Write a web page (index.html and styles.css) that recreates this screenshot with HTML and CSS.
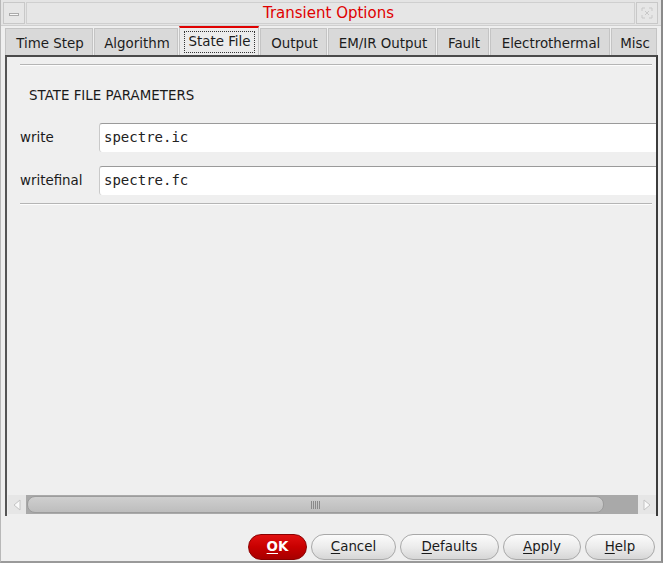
FILE: index.html
```html
<!DOCTYPE html>
<html>
<head>
<meta charset="utf-8">
<link rel="stylesheet" href="styles.css">
</head>
<body>
<div class="window">
  <div class="titlebar">
    <div class="tb-box tb-left"><span class="minbar"></span></div>
    <div class="tb-title">Transient Options</div>
    <div class="tb-box tb-right">
      <svg width="14" height="14" viewBox="0 0 14 14"><g fill="none" stroke="#c8c8c8" stroke-width="1"><path d="M2 2h3M2 2v3M12 2h-3M12 2v3M2 12h3M2 12v-3M12 12h-3M12 12v-3M5 5l4 4M9 5l-4 4"/></g></svg>
    </div>
  </div>
  <div class="tabs">
    <div class="tab">Time Step</div>
    <div class="tab">Algorithm</div>
    <div class="tab active"><span class="focus">State File</span></div>
    <div class="tab">Output</div>
    <div class="tab">EM/IR Output</div>
    <div class="tab">Fault</div>
    <div class="tab">Electrothermal</div>
    <div class="tab last">Misc</div>
  </div>
  <div class="panel">
    <div class="content">
      <div class="etch"></div>
      <div class="heading">STATE FILE PARAMETERS</div>
      <div class="row">
        <label class="lbl">write</label>
        <div class="field">spectre.ic</div>
      </div>
      <div class="row">
        <label class="lbl">writefinal</label>
        <div class="field">spectre.fc</div>
      </div>
      <div class="etch sep"></div>
    </div>
    <div class="scrollbar">
      <div class="arrow"><svg width="10" height="12" viewBox="0 0 10 12"><path d="M8 1L2 6l6 5z" fill="#fafafa" stroke="#c4c4c4"/></svg></div>
      <div class="trough">
        <div class="thumb"><span class="grip"></span></div>
      </div>
      <div class="arrow"><svg width="10" height="12" viewBox="0 0 10 12"><path d="M2 1l6 5-6 5z" fill="#fafafa" stroke="#c4c4c4"/></svg></div>
    </div>
  </div>
  <div class="buttons">
    <button class="btn ok"><u>O</u>K</button>
    <button class="btn cancel"><u>C</u>ancel</button>
    <button class="btn defaults"><u>D</u>efaults</button>
    <button class="btn apply"><u>A</u>pply</button>
    <button class="btn help"><u>H</u>elp</button>
  </div>
</div>
</body>
</html>
```
FILE: styles.css
```css
* { box-sizing: border-box; }
html, body { margin: 0; padding: 0; background: #ffffff; }
body { font-family: "DejaVu Sans", sans-serif; font-size: 13.4px; color: #1a1a1a; }

.window {
  width: 663px;
  height: 563px;
  background: #efefef;
  border-right: 2px solid #8a8a8a;
  border-bottom: 2px solid #9a9a9a;
  border-left: 1px solid #b8b8b8;
  display: flex;
  flex-direction: column;
  overflow: hidden;
}

.titlebar {
  height: 26px;
  display: flex;
  padding: 2px 0 0 2px;
  gap: 1px;
  background: #e4e4e4;
  border-bottom: 1px solid #cfcfcf;
}
.tb-box {
  width: 22px;
  height: 22px;
  background: #e6e6e6;
  border: 1px solid #c8c8c8;
  display: flex;
  align-items: center;
  justify-content: center;
}
.minbar {
  display: block;
  width: 10px;
  height: 3px;
  background: #f8f8f8;
  border: 1px solid #aaaaaa;
  margin-top: 3px;
}
.tb-title {
  flex: 1;
  height: 22px;
  border: 1px solid #cfcfcf;
  background: #e6e6e6;
  color: #e00000;
  font-size: 15px;
  line-height: 20px;
  text-align: center;
  padding-right: 4px;
}
.tb-right { margin-right: 3px; }

.tabs {
  display: flex;
  height: 29px;
  padding: 2px 0 0 4px;
  align-items: stretch;
}
.tab {
  background: #d9d9d9;
  border: 1px solid #c4c4c4;
  border-bottom: none;
  margin-right: 1px;
  padding: 4px 6px 0 8px;
  line-height: 22px;
  color: #1c1c1c;
  white-space: nowrap;
  text-align: center;
}
.tab:nth-child(1) { width: 88px; }
.tab:nth-child(2) { width: 84px; }
.tab:nth-child(4) { width: 67px; }
.tab:nth-child(5) { width: 108px; }
.tab:nth-child(6) { width: 52px; }
.tab:nth-child(7) { width: 120px; }
.tab.last { width: 46px; }
.tab.active {
  width: 80px;
  background: #ececec;
  border-top: 2px solid #e00000;
  margin-top: -2px;
  padding: 3px 2px 0 3px;
  line-height: 18px;
}
.focus {
  display: inline-block;
  border: 1px dotted #333;
  padding: 0 3px;
  height: 22px;
  line-height: 19px;
}

.panel {
  height: 461px;
  margin: 0 3px 0 4px;
  border-top: 2px solid #4a4a4a;
  border-left: 2px solid #555555;
  border-right: 2px solid #3c3c3c;
  display: flex;
  flex-direction: column;
  background: #efefef;
}
.content {
  flex: 1;
  padding: 7px 0 0 13px;
}
.etch {
  height: 2px;
  border-top: 1px solid #b5b5b5;
  border-bottom: 1px solid #fdfdfd;
  margin-right: 4px;
}
.heading {
  padding: 22px 0 0 9px;
  height: 50px;
  line-height: 15px;
}
.row {
  display: flex;
  align-items: center;
  height: 43px;
}
.lbl {
  width: 79px;
}
.field {
  flex: 1;
  height: 29px;
  background: #ffffff;
  border-top: 1px solid #9a9a9a;
  border-left: 1px solid #c9c9c9;
  border-radius: 3px 0 0 3px;
  font-family: "DejaVu Sans Mono", monospace;
  font-size: 14px;
  line-height: 27px;
  padding-left: 4px;
  color: #222;
}
.sep { margin-top: 1px; }

.scrollbar {
  height: 19px;
  display: flex;
  margin: 0 0 2px 1px;
  background: #cfcfcf;
}
.arrow {
  width: 18px;
  height: 19px;
  background: #e6e6e6;
  display: flex;
  align-items: center;
  justify-content: center;
}
.trough {
  flex: 1;
  background: #a9a9a9;
  padding: 1px 34px 1px 1px;
  display: flex;
}
.thumb {
  flex: 1;
  background: linear-gradient(#cfcfcf, #bdbdbd);
  border: 1px solid #9c9c9c;
  border-radius: 8px;
  display: flex;
  align-items: center;
  justify-content: center;
}
.grip {
  width: 9px;
  height: 8px;
  background: repeating-linear-gradient(90deg, #8a8a8a 0 1px, transparent 1px 2px);
}

.buttons {
  flex: 1;
  display: flex;
  justify-content: flex-end;
  align-items: flex-start;
  padding: 18px 6px 0 0;
  gap: 4px;
}
.btn {
  height: 26px;
  border-radius: 13px;
  border: 1px solid #a8a8a8;
  background: linear-gradient(#fbfbfb 0%, #ececec 50%, #d6d6d6 100%);
  font-family: "DejaVu Sans", sans-serif;
  font-size: 13.4px;
  color: #1a1a1a;
  padding: 0;
  line-height: 22px;
}
.btn u { text-underline-offset: 2px; }
.ok {
  width: 59px;
  background: linear-gradient(#e01010 0%, #c80000 50%, #a80000 100%);
  border-color: #8a0000;
  color: #ffffff;
  font-weight: bold;
}
.cancel { width: 85px; }
.defaults { width: 99px; }
.apply { width: 78px; }
.help { width: 70px; }
```
